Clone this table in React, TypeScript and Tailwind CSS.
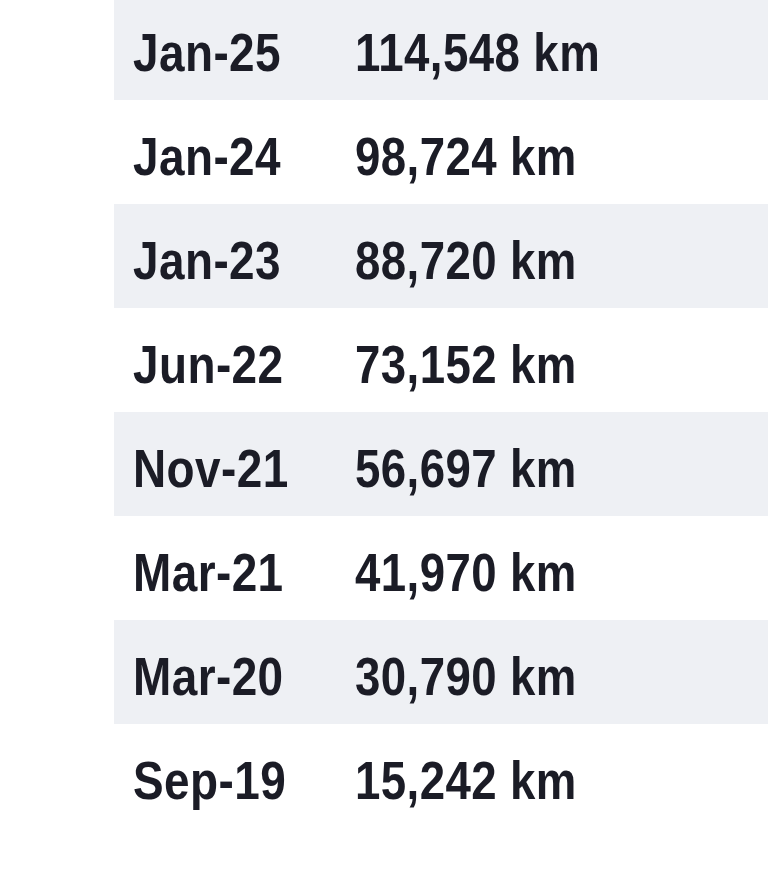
import React from "react";

const rows: [string, string][] = [
  ["Jan-25", "114,548 km"],
  ["Jan-24", "98,724 km"],
  ["Jan-23", "88,720 km"],
  ["Jun-22", "73,152 km"],
  ["Nov-21", "56,697 km"],
  ["Mar-21", "41,970 km"],
  ["Mar-20", "30,790 km"],
  ["Sep-19", "15,242 km"],
];

export default function App() {
  return (
    <div className="w-[768px] h-[880px] bg-white overflow-hidden">
      <div
        className="ml-[114px] -mt-[4px] flex flex-col text-[#1b1c26] font-bold text-[53px]"
        style={{ fontFamily: '"Liberation Sans Narrow", "Liberation Sans", Arial, sans-serif' }}
      >
        {rows.map(([d, v], i) => (
          <div
            key={d}
            className={`flex items-center h-[104px] pt-[8px] ${i % 2 === 0 ? "bg-[#eef0f4]" : "bg-white"}`}
          >
            <div className="w-[241px] pl-[19px] leading-none whitespace-nowrap">
              <span className="inline-block origin-left scale-x-[0.866] tracking-[0.5px]">{d}</span>
            </div>
            <div className="leading-none whitespace-nowrap">
              <span className="inline-block origin-left scale-x-[0.86] tracking-[0.5px]">{v}</span>
            </div>
          </div>
        ))}
      </div>
    </div>
  );
}
